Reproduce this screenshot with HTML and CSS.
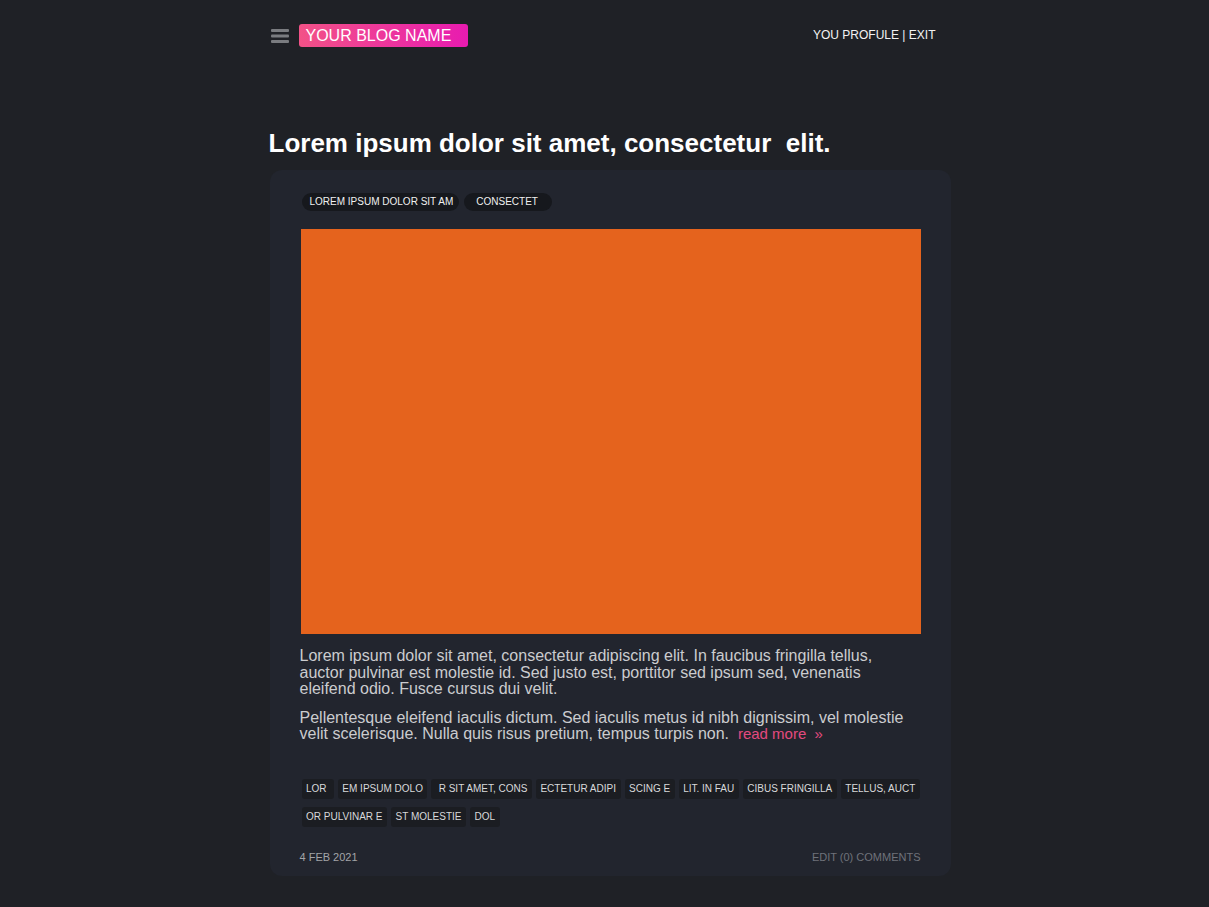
FILE: index.html
```html
<!DOCTYPE html>
<html>
<head>
<meta charset="utf-8">
<link rel="stylesheet" href="styles.css">
</head>
<body>
<div class="page">
  <header class="topbar">
    <div class="brand">
      <svg class="burger" width="18" height="14" viewBox="0 0 18 14"><rect x="0" y="0" width="18" height="3" rx="1" fill="#7a7c80"/><rect x="0" y="5.5" width="18" height="3" rx="1" fill="#7a7c80"/><rect x="0" y="11" width="18" height="3" rx="1" fill="#7a7c80"/></svg>
      <span class="logo">YOUR BLOG NAME</span>
    </div>
    <nav class="usernav">YOU PROFULE | EXIT</nav>
  </header>

  <h1 class="title">Lorem ipsum dolor sit amet, consectetur&nbsp; elit.</h1>

  <article class="card">
    <div class="cats">
      <span class="cat">LOREM IPSUM DOLOR SIT AM</span>
      <span class="cat cat-wide">CONSECTET</span>
    </div>
    <div class="image"></div>
    <div class="body">
      <p>Lorem ipsum dolor sit amet, consectetur adipiscing elit. In faucibus fringilla tellus, auctor pulvinar est molestie id. Sed justo est, porttitor sed ipsum sed, venenatis eleifend odio. Fusce cursus dui velit.</p>
      <p>Pellentesque eleifend iaculis dictum. Sed iaculis metus id nibh dignissim, vel molestie velit scelerisque. Nulla quis risus pretium, tempus turpis non.&nbsp; <a class="more">read more &nbsp;»</a></p>
    </div>
    <div class="tags">
      <span class="tag">LOR&nbsp;</span>
      <span class="tag">EM IPSUM DOLO</span>
      <span class="tag">&nbsp;R SIT AMET, CONS</span>
      <span class="tag">ECTETUR ADIPI</span>
      <span class="tag">SCING E</span>
      <span class="tag">LIT. IN FAU</span>
      <span class="tag">CIBUS FRINGILLA</span>
      <span class="tag">TELLUS, AUCT</span>
      <span class="tag">OR PULVINAR E</span>
      <span class="tag">ST MOLESTIE</span>
      <span class="tag">DOL</span>
    </div>
    <footer class="meta">
      <span class="date">4 FEB 2021</span>
      <span class="actions">EDIT (0) COMMENTS</span>
    </footer>
  </article>
</div>
</body>
</html>
```

FILE: styles.css
```css
html, body {
  margin: 0;
  padding: 0;
  background: #1f2126;
  font-family: "Liberation Sans", Arial, sans-serif;
}
.page {
  width: 682px;
  margin-left: calc(50% - 336px);
  padding-bottom: 30px;
}
.topbar {
  display: flex;
  justify-content: space-between;
  align-items: center;
  height: 24px;
  margin-top: 23px;
  padding-right: 15px;
}
.brand {
  display: flex;
  align-items: center;
  gap: 10px;
  padding-left: 2px;
}
.burger { display: block; margin-top: 2px; }
.logo {
  display: block;
  background: linear-gradient(90deg, #f25287 0%, #e81bb0 100%);
  color: #fff;
  font-size: 16px;
  line-height: 23px;
  padding: 0 17px 0 7px;
  border-radius: 3px;
}
.usernav {
  color: #f2f2f2;
  font-size: 12px;
}
.title {
  margin: 82px 0 0 0;
  color: #fff;
  font-size: 26px;
  line-height: 28px;
  font-weight: bold;
}
.card {
  margin-top: 13px;
  margin-left: 1px;
  background: #22252e;
  border-radius: 12px;
  padding: 23px 29px 13px 31px;
}
.cats {
  display: flex;
  gap: 5px;
  margin-left: 1px;
}
.cat {
  background: #16181d;
  color: #f0f0f0;
  font-size: 10px;
  line-height: 18px;
  padding: 0 6px 0 8px;
  border-radius: 9px;
}
.cat-wide { padding: 0 14px 0 12px; }
.image {
  margin-top: 18px;
  width: 620px;
  height: 405px;
  background: #e5631d;
}
.body {
  width: 612px;
  margin-left: -1px;
  margin-top: 14px;
  color: #cbcccf;
  font-size: 16px;
  line-height: 16.5px;
}
.body p { margin: 0 0 12px 0; }
.more {
  color: #e24a7f;
  font-size: 15px;
}
.tags {
  display: flex;
  flex-wrap: wrap;
  gap: 8px 4px;
  margin-top: 36px;
  margin-left: 1px;
  width: 640px;
}
.tag {
  background: #1b1d22;
  color: #d8d9db;
  font-size: 10px;
  line-height: 20px;
  height: 20px;
  padding: 0 4.5px;
  border-radius: 3px;
}
.meta {
  display: flex;
  justify-content: space-between;
  margin-top: 24px;
  margin-left: -1px;
  margin-right: 1px;
  font-size: 11px;
  line-height: 12px;
}
.date { color: #a3a4a7; }
.actions { color: #6f727a; }
```
